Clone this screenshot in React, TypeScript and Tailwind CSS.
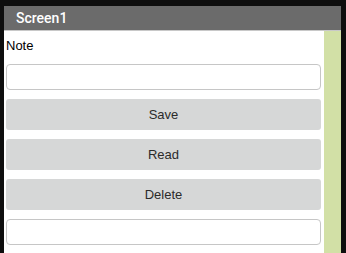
const buttons = ['Save', 'Read', 'Delete'];

const App = () => {
  return (
    <div className="w-[346px] h-[253px] bg-[#0e0e0e] pt-[6px] pl-[4px] pr-[5px] overflow-hidden font-['Liberation_Sans',Arial,sans-serif]">
      <div className="h-[25px] bg-[#6b6b6b] border-b border-[#c8c8c8] flex items-center pl-[12px]">
        <span className="text-white text-[14px] font-['Roboto',sans-serif] font-medium">Screen1</span>
      </div>
      <div className="flex h-[222px]">
        <div className="flex-1 bg-white px-[2px] pr-[3px]">
          <div className="mt-[7px] text-[13px] leading-[16px] text-black">Note</div>
          <input
            className="mt-[10px] block w-full h-[26px] rounded-[4px] border border-[#c6c6c6] bg-white outline-none px-2 text-[13px]"
            type="text"
          />
          {buttons.map((label) => (
            <button
              key={label}
              className="mt-[9px] block w-full h-[31px] rounded-[3px] bg-[#d6d7d7] text-[13px] text-[#2b2b2b]"
            >
              {label}
            </button>
          ))}
          <input
            className="mt-[9px] block w-full h-[26px] rounded-[4px] border border-[#c6c6c6] bg-white outline-none px-2 text-[13px]"
            type="text"
          />
        </div>
        <div className="w-[17px] bg-[#d2e0a6]" />
      </div>
    </div>
  );
};

export default App;
